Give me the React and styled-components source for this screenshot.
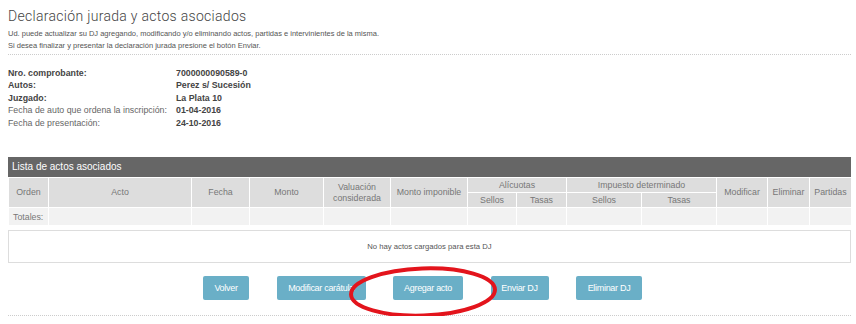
import React from "react";
import styled, { createGlobalStyle } from "styled-components";

const info = [
  { label: "Nro. comprobante:", value: "7000000090589-0", strong: true },
  { label: "Autos:", value: "Perez s/ Sucesión", strong: true },
  { label: "Juzgado:", value: "La Plata 10", strong: true },
  { label: "Fecha de auto que ordena la inscripción:", value: "01-04-2016" },
  { label: "Fecha de presentación:", value: "24-10-2016" }
];

const widths = [40, 143, 58, 74, 67, 77, 49, 50, 75, 75, 51, 42, 42];

const buttons = [
  { text: "Volver", width: 46 },
  { text: "Modificar carátula", width: 89 },
  { text: "Agregar acto", width: 70 },
  { text: "Enviar DJ", width: 58 },
  { text: "Eliminar DJ", width: 66 }
];

const App = () => (
  <>
    <GlobalStyle />
    <Page>
      <Title>Declaración jurada y actos asociados</Title>
      <Intro>
        Ud. puede actualizar su DJ agregando, modificando y/o eliminando actos, partidas e intervinientes de la misma.
        <br />
        Si desea finalizar y presentar la declaración jurada presione el botón Enviar.
      </Intro>
      <Separator />

      <InfoList>
        {info.map(row => (
          <InfoRow key={row.label}>
            <InfoLabel $strong={row.strong}>{row.label}</InfoLabel>
            <InfoValue>{row.value}</InfoValue>
          </InfoRow>
        ))}
      </InfoList>

      <PanelTitle>Lista de actos asociados</PanelTitle>
      <Table>
        <colgroup>
          {widths.map((w, i) => (
            <col key={i} style={{ width: w }} />
          ))}
        </colgroup>
        <thead>
          <tr>
            <Th rowSpan={2}>Orden</Th>
            <Th rowSpan={2}>Acto</Th>
            <Th rowSpan={2}>Fecha</Th>
            <Th rowSpan={2}>Monto</Th>
            <Th rowSpan={2}>
              Valuación
              <br />
              considerada
            </Th>
            <Th rowSpan={2}>Monto imponible</Th>
            <Th colSpan={2}>Alícuotas</Th>
            <Th colSpan={2}>Impuesto determinado</Th>
            <Th rowSpan={2}>Modificar</Th>
            <Th rowSpan={2}>Eliminar</Th>
            <Th rowSpan={2}>Partidas</Th>
          </tr>
          <tr>
            <Th>Sellos</Th>
            <Th>Tasas</Th>
            <Th>Sellos</Th>
            <Th>Tasas</Th>
          </tr>
        </thead>
        <tbody>
          <tr>
            <Td>Totales:</Td>
            {widths.slice(1).map((w, i) => (
              <Td key={i} />
            ))}
          </tr>
        </tbody>
      </Table>

      <EmptyBox>No hay actos cargados para esta DJ</EmptyBox>

      <ButtonRow>
        {buttons.map(b => (
          <Button key={b.text} $width={b.width}>
            {b.text}
          </Button>
        ))}
        <Highlight width="156" height="58" viewBox="0 0 156 58">
          <ellipse
            cx="78"
            cy="29"
            rx="72"
            ry="23.5"
            fill="none"
            stroke="#e3141c"
            strokeWidth="4"
            transform="rotate(-2 78 29)"
          />
        </Highlight>
      </ButtonRow>
      <Separator />
    </Page>
  </>
);

const GlobalStyle = createGlobalStyle`
  body {
    margin: 0;
    background: #fff;
    font-family: "Liberation Sans", Arial, sans-serif;
    color: #555;
  }
`;

const Page = styled.div`
  width: 843px;
  padding: 6px 5px 0 8px;
`;

const Title = styled.h1`
  margin: 0;
  font-family: Roboto, "Liberation Sans", sans-serif;
  font-weight: 300;
  font-size: 14px;
  line-height: 20px;
  color: #444;
  letter-spacing: 0.3px;
`;

const Intro = styled.p`
  margin: 2px 0 0;
  font-size: 7.5px;
  line-height: 12px;
  color: #555;
`;

const Separator = styled.div`
  margin-top: 2px;
  border-top: 1px dotted #ccc;
`;

const InfoList = styled.div`
  margin-top: 12px;
`;

const InfoRow = styled.div`
  display: grid;
  grid-template-columns: 168px 1fr;
  font-size: 8.8px;
  line-height: 12.4px;
`;

const InfoLabel = styled.span`
  color: ${p => (p.$strong ? "#444" : "#666")};
  font-weight: ${p => (p.$strong ? "bold" : "normal")};
`;

const InfoValue = styled.span`
  color: #444;
  font-weight: bold;
`;

const PanelTitle = styled.div`
  margin-top: 28px;
  height: 20px;
  line-height: 20px;
  padding-left: 4px;
  background: #666;
  color: #fff;
  font-size: 10px;
`;

const Table = styled.table`
  margin-top: 1px;
  width: 843px;
  table-layout: fixed;
  border-collapse: collapse;
`;

const Th = styled.th`
  background: #dddddd;
  border: 1px solid #fff;
  border-top: 0;
  color: #777;
  font-weight: normal;
  font-size: 8.8px;
  line-height: 10.5px;
  height: 14px;
  padding: 0;
  text-align: center;
`;

const Td = styled.td`
  background: #f2f2f2;
  border: 1px solid #fff;
  color: #777;
  font-size: 8.8px;
  height: 17px;
  padding: 0 0 0 4px;
`;

const EmptyBox = styled.div`
  margin-top: 4px;
  height: 33px;
  box-sizing: border-box;
  border: 1px solid #ddd;
  display: flex;
  align-items: center;
  justify-content: center;
  font-size: 7.7px;
  color: #555;
`;

const ButtonRow = styled.div`
  position: relative;
  display: flex;
  gap: 27.5px;
  margin-top: 13px;
  padding-left: 195px;
  height: 24px;
  margin-bottom: 15px;
`;

const Button = styled.div`
  width: ${p => p.$width}px;
  height: 24px;
  display: flex;
  align-items: center;
  justify-content: center;
  background: #6aafc7;
  border-radius: 2px;
  color: #fff;
  font-size: 9px;
  letter-spacing: -0.3px;
  white-space: nowrap;
`;

const Highlight = styled.svg`
  position: absolute;
  left: 337px;
  top: -13px;
  pointer-events: none;
`;

export default App;
